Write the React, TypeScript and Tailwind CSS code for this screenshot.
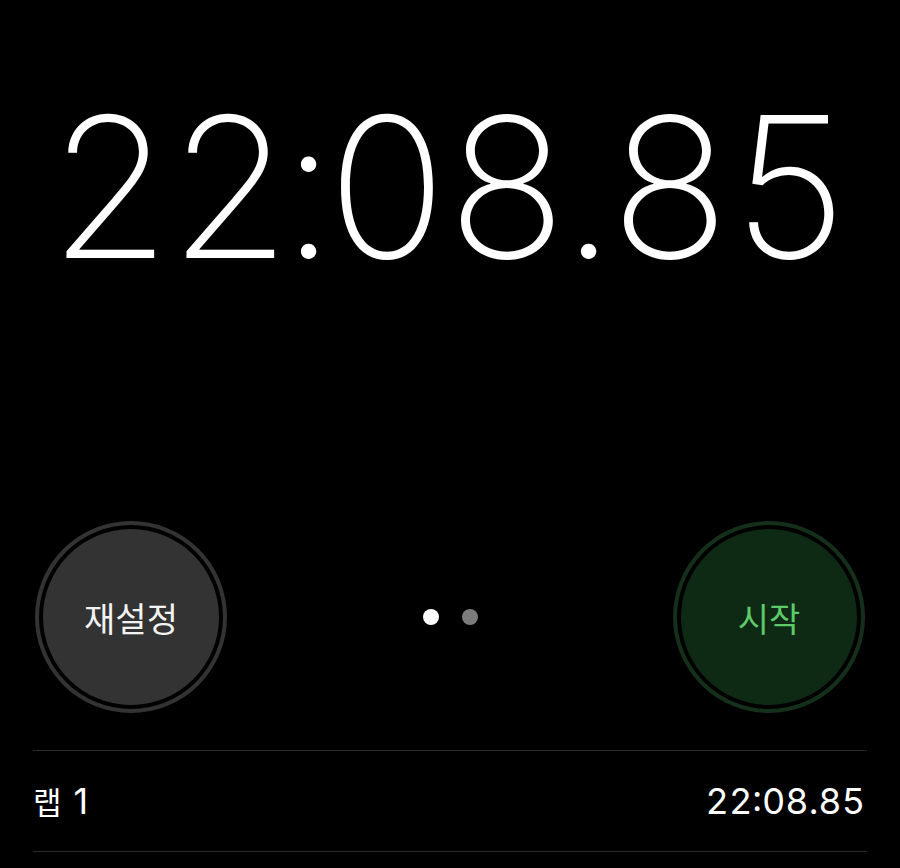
const BIG = "22:08.85";

function BigTime({ value }: { value: string }) {
  return (
    <div className="flex h-[196px] items-start justify-center font-['Inter',sans-serif] text-[196px] font-extralight leading-none text-white">
      {value.split("").map((ch, i) => {
        const w = ch === ":" ? "w-[37px]" : ch === "." ? "w-[43px]" : "w-[120px]";
        return (
          <span key={i} className={`${w} flex justify-center`}>
            {ch}
          </span>
        );
      })}
    </div>
  );
}

function RoundButton({
  label,
  ring,
  fill,
  text,
}: {
  label: string;
  ring: string;
  fill: string;
  text: string;
}) {
  return (
    <button
      type="button"
      className={`h-[192px] w-[192px] rounded-full border-4 p-[4px] ${ring}`}
    >
      <span
        className={`flex h-full w-full items-center justify-center rounded-full font-['Noto_Sans_CJK_KR',sans-serif] text-[34px] ${fill} ${text}`}
      >
        {label}
      </span>
    </button>
  );
}

export default function App() {
  return (
    <div className="flex h-[868px] w-[900px] flex-col overflow-hidden bg-black">
      <div className="pt-[89px]">
        <BigTime value={BIG} />
      </div>

      <div className="mt-[236px] flex items-center justify-between px-[35px]">
        <RoundButton
          label="재설정"
          ring="border-[#333333]"
          fill="bg-[#333333]"
          text="text-[#f2f2f2]"
        />
        <div className="flex items-center gap-[23px]">
          <span className="h-[16px] w-[16px] rounded-full bg-white" />
          <span className="h-[16px] w-[16px] rounded-full bg-[#7c7c7c]" />
        </div>
        <RoundButton
          label="시작"
          ring="border-[#15301a]"
          fill="bg-[#0f2a14]"
          text="text-[#5ecb6a]"
        />
      </div>

      <div className="mx-[33px] mt-[37px] border-y border-[#2a2a2a]">
        <div className="flex h-[100px] items-center justify-between pr-[2px] text-white">
          <span className="flex items-baseline gap-[12px] font-['Inter','Noto_Sans_CJK_KR',sans-serif] text-[36px]">
            <span className="font-['Noto_Sans_CJK_KR',sans-serif] text-[31px]">랩</span>
            <span>1</span>
          </span>
          <span className="font-['Inter',sans-serif] text-[36px] tabular-nums">22:08.85</span>
        </div>
      </div>
    </div>
  );
}
